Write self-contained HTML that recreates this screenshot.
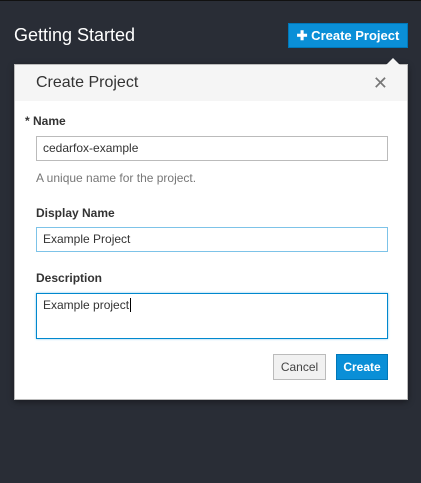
<!DOCTYPE html>
<html><head><style>
*{box-sizing:border-box;margin:0;padding:0}
body{width:421px;height:483px;background:#292d36;font-family:"Liberation Sans",sans-serif;position:relative;overflow:hidden;border-top:1px solid #111}
.a{position:absolute}
.title{left:14px;top:24px;color:#fff;font-size:18px}
.btn{left:288px;top:22px;width:120px;height:25px;background:#0a8fd7;border:1px solid #0077b8;color:#fff;font-weight:bold;font-size:13px;line-height:23px;text-align:center}
.pop{left:14px;top:63px;width:394px;height:336px;background:#fff;border:1px solid #bbb;box-shadow:0 2px 6px rgba(0,0,0,.4)}
.arrow{left:386px;top:57px;width:0;height:0;border-left:7px solid transparent;border-right:7px solid transparent;border-bottom:7px solid #f5f5f5}
.hdr{left:0;top:0;width:392px;height:36px;background:#f5f5f5;color:#333;font-size:16px;line-height:36px;padding-left:21px}
.x{right:19px;top:0;color:#777;font-size:18px;line-height:36px}
.lbl{color:#333;font-size:12px;font-weight:bold}
.inp{left:21px;width:352px;height:25px;border:1px solid #bbb;font-size:12px;color:#333;line-height:23px;padding-left:6px}
.help{color:#777;font-size:12px}
.b2{height:26px;font-size:12px;line-height:24px;text-align:center}
</style></head><body>
<div class="a title">Getting Started</div>
<div class="a btn">✚ Create Project</div>
<div class="a pop">
 <div class="a hdr">Create Project</div>
 <div class="a x">✕</div>
 <div class="a lbl" style="left:10px;top:49px">* Name</div>
 <div class="a inp" style="top:71px">cedarfox-example</div>
 <div class="a help" style="left:21px;top:106px">A unique name for the project.</div>
 <div class="a lbl" style="left:21px;top:141px">Display Name</div>
 <div class="a inp" style="top:162px;border-color:#7dc3e8">Example Project</div>
 <div class="a lbl" style="left:21px;top:206px">Description</div>
 <div class="a inp" style="top:228px;height:46px;border-color:#0088ce;box-shadow:0 0 2px #7dc3e8;line-height:22px">Example project<span style="border-left:1px solid #000;margin-left:1px"></span></div>
 <div class="a b2" style="left:258px;top:289px;width:53px;background:#f1f1f1;border:1px solid #bbb;color:#444">Cancel</div>
 <div class="a b2" style="left:321px;top:289px;width:52px;background:#0a8fd7;border:1px solid #0077b8;color:#fff;font-weight:bold">Create</div>
</div>
<div class="a arrow"></div>
</body></html>
